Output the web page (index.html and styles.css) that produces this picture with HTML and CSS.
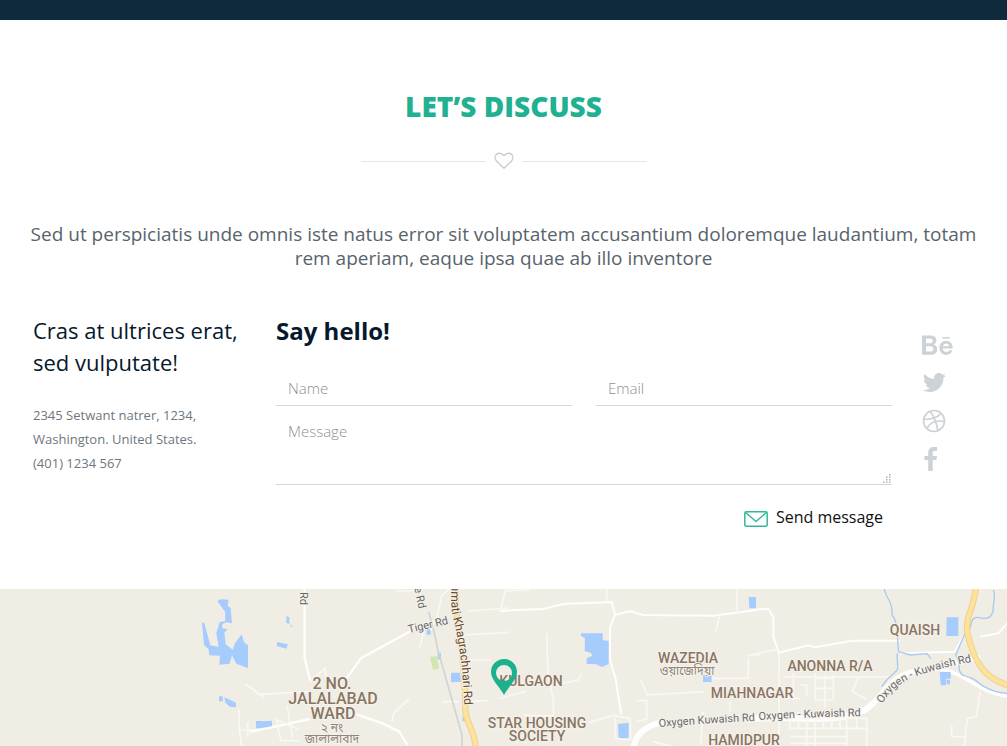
FILE: index.html
```html
<!DOCTYPE html>
<html lang="en">
<head>
<meta charset="utf-8">
<meta name="viewport" content="width=device-width, initial-scale=1">
<title>Let’s discuss</title>
<link rel="stylesheet" href="styles.css">
</head>
<body>
<div class="topbar"></div>
<main class="contact">
  <h1 class="title">LET’S DISCUSS</h1>
  <div class="divider">
    <svg width="20" height="18" viewBox="0 0 20 18" aria-hidden="true"><path d="M10 16.3 2.7 9.2C.7 7.100 .6 4.200 2.300 2.500 4.500.5 7.800.9 10 3.700 12.200.9 15.500.5 17.700 2.500 19.400 4.200 19.300 7.100 17.300 9.200Z" fill="none" stroke="#c9c9cb" stroke-width="1.300" stroke-linejoin="round"/></svg>
  </div>
  <p class="intro">Sed ut perspiciatis unde omnis iste natus error sit voluptatem accusantium doloremque laudantium, totam rem aperiam, eaque ipsa quae ab illo inventore</p>
  <div class="columns">
    <section class="office">
      <h2 class="office-title">Cras at ultrices erat, sed vulputate!</h2>
      <address class="address">2345 Setwant natrer, 1234,<br>Washington. United States.<br>(401) 1234 567</address>
    </section>
    <form class="form">
      <h2 class="form-title">Say hello!</h2>
      <div class="pair">
        <input class="field" type="text" placeholder="Name" aria-label="Name">
        <input class="field" type="email" placeholder="Email" aria-label="Email">
      </div>
      <div class="message">
        <textarea class="field area" placeholder="Message" aria-label="Message"></textarea>
        <svg class="grip" width="9" height="9" viewBox="0 0 9 9" fill="#b4b4b4" aria-hidden="true"><path d="M7 0h1.500v1.500H7zM7 2.500h1.500V4H7zM4 2.500h1.500V4H4zM7 5h1.500v1.500H7zM4 5h1.500v1.500H4zM7 7.500h1.500V9H7zM4 7.500h1.500V9H4zM1 7.500h1.500V9H1z"/></svg>
      </div>
      <button class="send" type="button">
        <svg width="24" height="16" viewBox="0 0 24 16" fill="none" stroke="#35b89a" stroke-width="1.500" stroke-linejoin="round" aria-hidden="true"><rect x=".8" y=".8" width="22.400" height="14.400" rx="1.500"/><path d="m1.300 1.300 10.700 9.200L22.700 1.300"/></svg>
        <span>Send message</span>
      </button>
    </form>
    <nav class="social" aria-label="Social">
      <a href="#" aria-label="Behance"><svg width="32" height="26" viewBox="0 0 32 26" fill="#cdd2d6"><path fill-rule="evenodd" d="M0 3.500h8.500c3.700 0 5.900 1.500 5.900 4.800 0 2-1 3.300-2.700 4.100 2.400.7 3.600 2.500 3.600 4.900 0 3.700-3 5.500-6.500 5.500H0zM4 6.800v4.500h4c1.600 0 2.700-.7 2.700-2.300 0-1.700-1.200-2.200-2.900-2.200zm0 7.400v5.300h4.300c1.700 0 3-.6 3-2.600s-1.200-2.700-3-2.700z"/><path fill-rule="evenodd" d="M30.700 16.500H20.900c.1 2.300 1.300 3.500 3.400 3.500 1.500 0 2.700-.8 3-1.700h3.100c-1 3.100-3.100 4.600-6.200 4.600-4.200 0-6.800-3-6.800-7.100 0-4 2.800-7.100 6.800-7.100 4.500 0 6.800 3.700 6.500 7.800zm-3.500-2.300c-.4-1.800-1.200-2.800-3-2.800s-3 1.100-3.200 2.800zM20.300 5h7.500v1.500h-7.500z"/></svg></a>
      <a href="#" aria-label="Twitter"><svg width="24" height="20" viewBox="0 0 24 20" fill="#cdd2d6"><path d="M24 2.400c-.8.400-1.700.7-2.700.8.900-.6 1.700-1.500 2-2.600-.9.500-1.900.9-3 1.100A4.700 4.700 0 0 0 12.200 6C8.300 5.800 4.800 3.900 2.500 1.100c-1.300 2.200-.6 4.800 1.500 6.300-.8 0-1.500-.2-2.200-.6 0 2.300 1.600 4.300 3.900 4.800-.7.200-1.400.2-2.100.1.600 1.900 2.400 3.300 4.500 3.300A9.600 9.600 0 0 1 1 17c10 5.700 20.500-1.600 20.500-12.200 1-.7 1.800-1.500 2.500-2.400z"/></svg></a>
      <a href="#" aria-label="Dribbble"><svg width="24" height="24" viewBox="0 0 24 24" fill="none" stroke="#cdd2d6" stroke-width="1.700"><circle cx="12" cy="12" r="10.500"/><path d="M8 2.300c4.200 5.200 6.600 11.200 7.800 19.100M1.600 10.500c7.500.1 13.500-1.500 17.600-6.200M4.800 19.700C8.400 13 14.800 10.800 22.500 12.700"/></svg></a>
      <a href="#" aria-label="Facebook"><svg width="16" height="24" viewBox="0 0 16 24" fill="#cdd2d6"><path d="M15 0v4.100h-2.400c-1.600 0-1.900.8-1.900 2V9H15l-.6 4.100h-3.700V24H6.200V13.100H2.400V9h3.800V5.600C6.200 2 8.500 0 11.800 0z"/></svg></a>
    </nav>
  </div>
</main>
<section class="map" aria-label="Map">
  <svg class="map-art" viewBox="0 0 1007 157" preserveAspectRatio="xMidYMin slice">
    <defs>
      <path id="highway" d="M453 -11Q449 14 454 33T462 82T464 140"/>
      <path id="oxygen-a" d="M659 138Q705 134 755 132"/>
      <path id="oxygen-b" d="M759 131Q805 128 870 127"/>
      <path id="oxygen-c" d="M882 115C899 88 920 84 980 71"/>
    </defs>
    <g transform="translate(0 -4) scale(.33333)">
      <path class="water" d="m652 48 10-5 24 1-3 19 9 5 4 47-16-3-13 5v13l16 3-10 10 4 35 21 16 7-19 20-27 7 24 12 9v68l-35-13-13-25-7 25-31 3 2-27-32-1-2-18-14-13-6-68 7 3 18 66 25 4-7-40 10-34 16-2 1-28zM673 337l35 16v14l-18-2-14-12zM657 334h11v15h-11zM768 408h18v22h-18z"/>
      <path class="lane" d="m735 297 38 25 20 14M716 370l2 65 8 55M720 435h60M743 410v45"/>
    </g>
    <g transform="translate(250 -4) scale(.33333)">
      <path class="water" d="m82 171 32 7-5 13-29-8zM110 93l8 4v20l-9-4zM122 118l9 10-9-5zM20 410l46-3v21H22zM603 263h27l3 27-30 2zM530 132h12v17h-12zM563 203h10v20h-10zM638 397h8v12h-8z"/>
      <path class="park" d="m540 216 20-3 7 37-18 5z"/>
      <path class="road" d="M164 0v220l16 65M0 440l90-18 90-20M290 280l43-60 155-85M320 388l80 28 48 24 24 40"/>
      <path class="lane" d="m0 305 25 23 160-8M180 290l45-40 8 55M78 401l15 66h58M111 362l17 96M80 405l65 28M478 340l-47 45-5 25M440 18h50M568 40l30-30M574 40q-12 60-32 97M520 143l-11 45M655 78l120-9M630 150l150-8M644 225h80M654 350l60-4M577 350h50"/>
      <path class="rail" d="M536 80c4 15 20 70 26 110l40 140 34 120v40"/>
      <path class="trunk" d="M618 0c-12 80 30 180 28 370 0 50 30 60 32 125"/>
      <path class="trunk-core" d="M618 0c-12 80 30 180 28 370 0 50 30 60 32 125"/>
    </g>
    <g transform="translate(500 -4) scale(.33333)">
      <path class="water" d="M243 145h65v20l18 3v70l-20 8-18-8-28-1v-17l17-8-5-9-18-5 1-38-12-8zM746 36h20v34h-18zM609 270h26v21h-26zM354 417l32-4v45l-30 5z"/>
      <path class="lane road-mid" d="M0 78l70-4 60-2 60-15 145-6 10 37-15 40v95l17 60 17 105M345 90l45-12 40 12 210 2 130-17"/>
      <path class="road-wide" d="M400 500c0-60 50-80 90-90"/>
      <path class="lane" d="M18 12 0 80M18 17l70-2M140 145l4 120 16 80v48L70 390M0 340l80-22M165 300l70-15 10-20M422 285l20 45 170-10M410 347h30v55l-30 7M265 413l75-22 50 10 2 60M345 400v60l50 5M658 95l-10 45M740 210h40M635 280h110v-60M690 350v30M610 380l-8 100M710 10v70M320 10v40M460 470l60 15"/>
    </g>
    <g transform="translate(750 -4) scale(.33333)">
      <path class="lane road-mid" d="m0 75 55-4 15 25v60l16 47 90-22 20 6 110-20h145M450 205l165-5 30-55M690 155l55-10 35-40"/>
      <path class="road-wide" d="M-10 405c100-20 260 20 355-30 70-50 70-110 180-120M510 258 690 217"/>
      <path class="road-mid-wide" d="M525 250c120-5 145 75 260 85"/>
      <path class="lane" d="M87 205v290M100 276h315l2 20-30 50M325 275l-17 45 40 22M690 320l-10 75-28 5-10 90M100 310h35M100 340h50M130 265v80M195 265v80M225 270v100M195 280h55M195 310h55M195 345h55M250 270v75M110 400h240v90M120 380v50h230M145 380v50M170 380v110M195 380v110M220 380v50M245 380v50M270 380v50M290 380v110M320 380v50M120 455h170M120 475h170M150 300h20v35M605 420v35h45M0 210l85-18"/>
      <path class="stream" d="M402 10c10 40 25 35 24 80 20 20 15 80 20 110l35 10 50-4 12 15M442 205c-2 30 3 30 0 50l-32 30-15 20M645 145l-28 65c20 30 0 50 25 62 40 10 40 20 55 30 35 20 50 20 85 25M730 15c10 30-5 50 0 60-10 40-35 20-50 22-25 5-10 30-28 45"/>
      <path class="trunk" d="M678 5c-5 70-40 95-22 155 25 100 70 130 135 145"/>
      <path class="trunk-core" d="M678 5c-5 70-40 95-22 155 25 100 70 130 135 145"/>
      <path class="water" d="M0 37h18v33H0zM590 97h35v56h-36zM569 261h33v20h-14v20h-16zM590 284h10v14h-10z"/>
    </g>
    <g class="place place-lg">
      <text x="332" y="100">2 NO.</text><text x="333" y="115">JALALABAD</text><text x="333" y="130">WARD</text>
    </g>
    <g class="place">
      <text x="531" y="97">KULGAON</text><text x="537" y="139">STAR HOUSING</text><text x="537" y="152">SOCIETY</text>
      <text x="688" y="74">WAZEDIA</text><text x="752" y="109">MIAHNAGAR</text><text x="744" y="156">HAMIDPUR</text>
      <text x="830" y="82">ANONNA R/A</text><text x="915" y="46">QUAISH</text>
    </g>
    <g class="bangla">
      <text x="332" y="143">২ নং</text><text x="332" y="154">জালালাবাদ</text><text x="687" y="86">ওয়াজেদিয়া</text>
    </g>
    <g class="street">
      <text transform="translate(300 3) rotate(90)">Rd</text>
      <text transform="translate(413 -7) rotate(78)">ue Rd</text>
      <text transform="translate(409 44) rotate(-13)">Tiger Rd</text>
      <text><textPath href="#oxygen-a">Oxygen Kuwaish Rd</textPath></text>
      <text><textPath href="#oxygen-b">Oxygen - Kuwaish Rd</textPath></text>
      <text><textPath href="#oxygen-c">Oxygen - Kuwaish Rd</textPath></text>
      <text class="highway"><textPath href="#highway">Jamati Khagrachhari Rd</textPath></text>
    </g>
    <path fill="#1bb18c" fill-rule="evenodd" d="M504 106c-4-8-13-15-13-23a13 13 0 0 1 26 0c0 8-9 15-13 23zm0-30a8 8 0 1 0 0 16 8 8 0 0 0 0-16z"/>
  </svg>
</section>
</body>
</html>
```
FILE: styles.css
```css
* { box-sizing: border-box; }
body {
  margin: 0;
  min-height: 100vh;
  display: flex;
  flex-direction: column;
  background: #fff;
  color: #06192c;
  font-family: "Open Sans", "Noto Sans", sans-serif;
}
h1, h2, p { margin: 0; }
.topbar { height: 20px; background: #0f293d; }
.contact { padding: 64px 24px 60px; }
.title {
  color: #1fb190;
  font-size: 28px;
  line-height: 44px;
  font-weight: 800;
  text-align: center;
}
.divider {
  display: flex;
  align-items: center;
  justify-content: center;
  gap: 8px;
  height: 18px;
  margin-top: 24px;
}
.divider::before, .divider::after {
  content: "";
  width: 125px;
  height: 1px;
  background: #e6e6e6;
}
.intro {
  margin-top: 52px;
  color: #58636c;
  font-size: 19px;
  line-height: 24px;
  font-weight: 500;
  text-align: center;
}
.columns {
  display: grid;
  grid-template-columns: 213px 1fr 52px;
  gap: 30px;
  margin-top: 44px;
  padding: 0 9px;
}
.office-title { font-size: 22px; line-height: 32px; font-weight: 400; }
.address {
  margin-top: 25px;
  color: #6d7780;
  font-size: 13px;
  line-height: 24px;
  font-style: normal;
}
.form { display: flex; flex-direction: column; }
.form-title { font-size: 24px; line-height: 34px; font-weight: 700; }
.pair {
  display: grid;
  grid-template-columns: 1fr 1fr;
  gap: 24px;
  margin-top: 22px;
}
.field {
  display: block;
  width: 100%;
  min-width: 0;
  height: 36px;
  padding: 0 12px;
  border: 0;
  border-bottom: 1px solid #d5d7d9;
  border-radius: 0;
  background: transparent;
  color: #06192c;
  font-family: inherit;
  font-size: 15px;
  font-weight: 300;
  line-height: 24px;
  outline: 0;
}
.field::placeholder { color: #8f8f8f; opacity: 1; }
.message { position: relative; }
.area { height: 79px; padding-top: 13px; resize: none; }
.grip { position: absolute; right: 1px; bottom: 2px; }
.send {
  display: flex;
  align-items: center;
  gap: 8px;
  align-self: flex-end;
  margin-top: 20px;
  padding: 0 9px 0 0;
  border: 0;
  background: none;
  color: #111;
  font-family: inherit;
  font-size: 16px;
  line-height: 24px;
}
.send svg { margin-top: 3px; }
.social {
  display: flex;
  flex-direction: column;
  align-items: flex-start;
  gap: 14px;
  padding-top: 19px;
}
.social a { display: flex; align-items: center; height: 24px; }
.map { flex: 1; min-height: 157px; background: #f0ede5; overflow: hidden; display: flex; }
.map-art { width: 100%; height: auto; min-height: 157px; }
.water { fill: #a6cbfd; }
.park { fill: #cfe8b0; }
.road, .road-wide, .road-mid-wide, .lane, .rail, .stream, .trunk, .trunk-core { fill: none; stroke-linejoin: round; }
.road { stroke: #fffefb; stroke-width: 7; }
.road-wide { stroke: #fff; stroke-width: 18; }
.road-mid-wide { stroke: #fff; stroke-width: 11; }
.lane { stroke: #faf8f3; stroke-width: 5; }
.road-mid { stroke: #fffefb; stroke-width: 6; }
.rail { stroke: #cfd5d6; stroke-width: 5; }
.stream { stroke: #a9c9ee; stroke-width: 4; }
.trunk { stroke: #eed28b; stroke-width: 19; }
.trunk-core { stroke: #fde29b; stroke-width: 13; }
.place, .bangla, .street {
  stroke: #f5f2eb;
  stroke-width: 2px;
  paint-order: stroke;
  stroke-linejoin: round;
}
.place { fill: #8a7562; font: 500 14px Roboto, sans-serif; text-anchor: middle; }
.place-lg { font-size: 16px; }
.bangla { fill: #8f8577; font: 12px "Noto Sans Bengali", "Noto Sans", sans-serif; text-anchor: middle; }
.street { fill: #69696b; font: 11px Roboto, sans-serif; }
.highway { fill: #674b2b; font-size: 12px; }
```
